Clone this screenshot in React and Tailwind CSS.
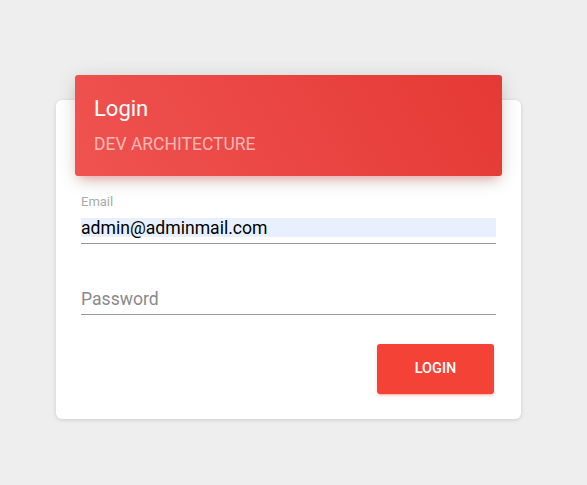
import React from 'react';

function LoginCard() {
  return (
    <div className="relative w-[465px] h-[319px] bg-white rounded-[6px] shadow-[0_1px_4px_0_rgba(0,0,0,0.14)]">
      {/* header */}
      <div className="absolute left-[19px] right-[19px] top-[-25px] h-[101px] rounded-[3px] bg-[linear-gradient(60deg,#ef5350,#e53935)] shadow-[0_4px_20px_0_rgba(0,0,0,0.14),0_7px_10px_-5px_rgba(244,67,54,0.4)] px-[19px] pt-[19px]">
        <h4 className="text-[22px] leading-[29px] text-white">Login</h4>
        <p className="mt-[10px] text-[17.5px] leading-[22px] text-white/60">DEV ARCHITECTURE</p>
      </div>

      {/* form */}
      <div className="px-[25px] pt-[93px]">
        <label className="block text-[13px] leading-[17px] text-[#aaaaaa]">Email</label>
        <div className="mt-[8px] border-b border-[#999999] pb-[6px]">
          <div className="h-[19px] bg-[#e8f0fe] text-[17.6px] leading-[20px] text-black">admin@adminmail.com</div>
        </div>
        <div className="mt-[45px] border-b border-[#999999] pb-[6px]">
          <div className="h-[19px] text-[17.6px] leading-[20px] text-[#8a8a8a]">Password</div>
        </div>
        <div className="mt-[29px] flex justify-end pr-[2px]">
          <button className="w-[117px] h-[50px] rounded-[3px] bg-[#f44336] text-white text-[14.5px] font-medium shadow-[0_2px_2px_0_rgba(244,67,54,0.14),0_3px_1px_-2px_rgba(244,67,54,0.2),0_1px_5px_0_rgba(244,67,54,0.12)]">
            LOGIN
          </button>
        </div>
      </div>
    </div>
  );
}

export default function App() {
  return (
    <div className="min-h-screen w-full bg-[#eeeeee] pt-[100px] pl-[56px] font-['Roboto',sans-serif]">
      <LoginCard />
    </div>
  );
}
